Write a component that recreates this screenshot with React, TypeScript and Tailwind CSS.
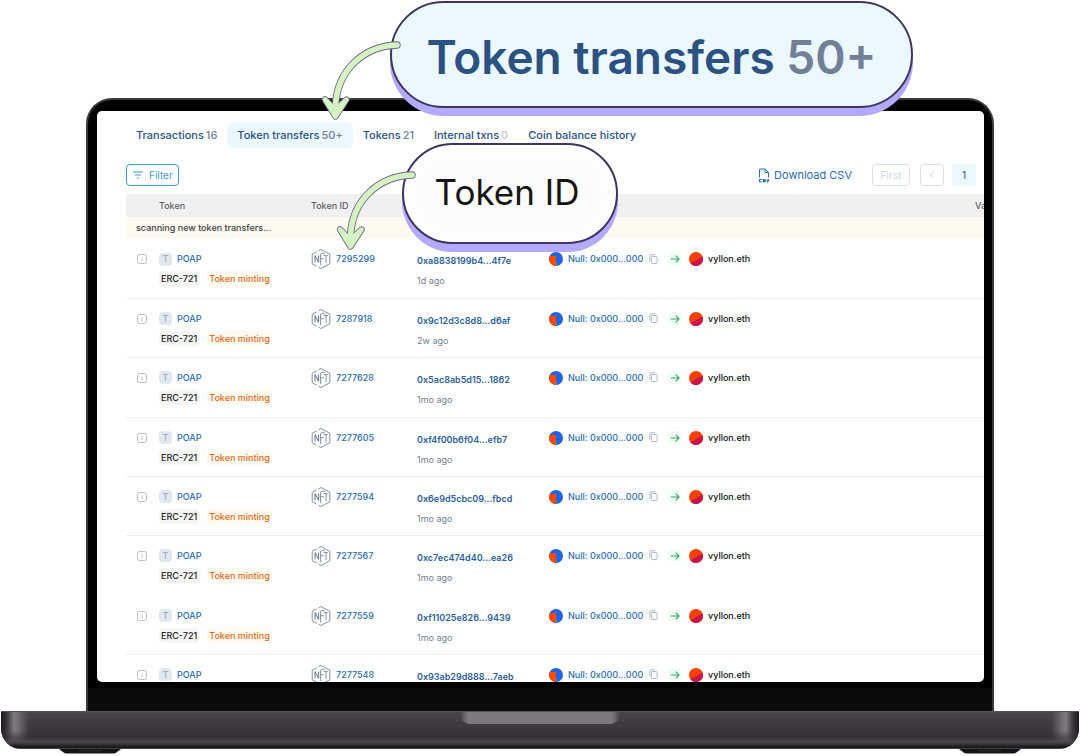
import React from "react";

type Transfer = { id: string; hash: string; age: string };

const transfers: Transfer[] = [
  { id: "7295299", hash: "0xa8838199b4...4f7e", age: "1d ago" },
  { id: "7287918", hash: "0x9c12d3c8d8...d6af", age: "2w ago" },
  { id: "7277628", hash: "0x5ac8ab5d15...1862", age: "1mo ago" },
  { id: "7277605", hash: "0xf4f00b6f04...efb7", age: "1mo ago" },
  { id: "7277594", hash: "0x6e9d5cbc09...fbcd", age: "1mo ago" },
  { id: "7277567", hash: "0xc7ec474d40...ea26", age: "1mo ago" },
  { id: "7277559", hash: "0xf11025e826...9439", age: "1mo ago" },
  { id: "7277548", hash: "0x93ab29d888...7aeb", age: "1mo ago" },
];

const tabs = [
  { label: "Transactions", count: "16" },
  { label: "Token transfers", count: "50+", active: true },
  { label: "Tokens", count: "21" },
  { label: "Internal txns", count: "0", empty: true },
  { label: "Coin balance history" },
];

function InfoIcon() {
  return (
    <svg viewBox="0 0 10 10" className="block size-[10px]" fill="none" stroke="#a9b0ba" aria-hidden="true">
      <rect x="0.5" y="0.5" width="9" height="9" rx="2" strokeWidth="0.8" />
      <path d="M5 4.4v2.8M5 2.7v0.9" strokeWidth="0.8" />
    </svg>
  );
}

function NftIcon() {
  return (
    <svg viewBox="0 0 20 20" className="block size-5" fill="none" stroke="#76839a" strokeWidth="0.9" aria-hidden="true">
      <path d="M7.500 1.800 10 .5l8.800 4.800v9.400L10 19.500l-2.500-1.300M5.700 17.200l-4.500-2.500V5.300l4.500-2.500" />
      <path d="M4 13.600V6.600l3.600 6.800V6.400" strokeWidth="1.100" />
      <path d="M9.600 16.200V5.200L12 4l2 1.100M9.600 9.700h3.200" />
      <path d="M12.600 6.600h4.200M15.100 6.600v7.600" />
    </svg>
  );
}

function CopyIcon() {
  return (
    <svg viewBox="0 0 10 12" className="block h-[11px] w-[9px]" fill="none" stroke="#a3b2c5" aria-hidden="true">
      <rect x="2.700" y="2.700" width="6.300" height="7.800" rx="0.8" />
      <path d="M1 8.500V1.500c0-.4.200-.7.600-.7H7" />
    </svg>
  );
}

function CsvIcon() {
  return (
    <svg viewBox="0 0 12 15" className="block h-[15px] w-3" fill="none" stroke="#2b6cb0" aria-hidden="true">
      <path d="M1.500 9.500V1.800c0-.5.300-.8.800-.8H7l3.500 3.500v5M7 1v3.500h3.500" />
      <path d="M3.800 11.500H1.500v2.300h2.300M7.400 11.500H5.300v1.100h1.900v1.200H5M8.700 11.300l1.100 2.500 1.100-2.500" strokeWidth="1.100" />
    </svg>
  );
}

function FromAvatar() {
  return (
    <svg viewBox="0 0 14 14" className="block size-[14px]" aria-hidden="true">
      <circle cx="7" cy="7" r="7" fill="#2362e1" />
      <path d="M.7 4H7v10A7 7 0 0 1 .7 4Z" fill="#fb4a03" />
      <path d="M7 10.500h1.200L7.600 14H7Z" fill="#1fa0d8" />
    </svg>
  );
}

function ToAvatar() {
  return (
    <svg viewBox="0 0 14 14" className="block size-[14px]" aria-hidden="true">
      <circle cx="7" cy="7" r="7" fill="#f73f01" />
      <path d="M13.500 4.500A7 7 0 0 1 2.100 12L1.500 11.300Z" fill="#c8144c" />
    </svg>
  );
}

function CurvedArrow() {
  const shaft = "M77 7C44 8 17 32 15.500 68";
  const head = "M5 61.500 15.500 78.500 26.500 61.500 18.500 69H12.500Z";
  return (
    <svg viewBox="0 0 84 86" className="block h-[86px] w-[84px]" fill="none" strokeLinecap="round" strokeLinejoin="round" aria-hidden="true">
      <path d={shaft} stroke="#71658a" strokeWidth="7.400" />
      <path d={head} stroke="#71658a" strokeWidth="6.400" />
      <path d={shaft} stroke="#d5f2c3" strokeWidth="5.600" />
      <path d={head} fill="#d5f2c3" stroke="#d5f2c3" strokeWidth="4.600" />
    </svg>
  );
}

function Tabs() {
  return (
    <nav className="flex h-[26px] text-[11px] font-medium text-[#2c5282]" aria-label="Address data">
      {tabs.map((tab) => (
        <a
          key={tab.label}
          href="#"
          className={
            tab.active
              ? "flex items-center gap-[2px] rounded-md bg-[#ebf8ff] px-[10px]"
              : "flex items-center gap-[2px] px-[10px]"
          }
        >
          {tab.label}
          {tab.count && (
            <span className={tab.empty ? "text-[#c3c6cb]" : "text-[#718096]"}>{tab.count}</span>
          )}
        </a>
      ))}
    </nav>
  );
}

function Toolbar() {
  return (
    <div className="mt-4 flex h-[22px] items-center justify-between">
      <button className="flex h-[22px] items-center gap-[5px] rounded border border-[#4299e1] px-[5px] text-[10px] text-[#4299e1]">
        <svg viewBox="0 0 12 8" className="h-2 w-3" stroke="currentColor" aria-hidden="true">
          <path d="M1 1h10M3 4h6M5 7h2" />
        </svg>
        Filter
      </button>
      <div className="flex items-center">
        <a href="#" className="flex items-center gap-1 text-[11px] text-[#2b6cb0]">
          <CsvIcon />
          Download CSV
        </a>
        <div className="ml-5 flex gap-2 text-[10px] font-medium">
          <button disabled className="mr-[2px] h-[22px] w-[38px] rounded border border-[#d9e2ec] text-[#d3dde8]">First</button>
          <button disabled aria-label="Previous page" className="flex h-[22px] w-6 items-center justify-center rounded border border-[#d9e2ec] text-[#c5d0dc]">
            <svg viewBox="0 0 6 8" className="h-2 w-[6px]" fill="none" stroke="currentColor" aria-hidden="true">
              <path d="M4.500 1 1.500 4l3 3" />
            </svg>
          </button>
          <button className="h-[22px] w-6 rounded bg-[#ebf8ff] text-[#4a6f9b]">1</button>
        </div>
      </div>
    </div>
  );
}

function TransferRow({ transfer }: { transfer: Transfer }) {
  return (
    <tr className="h-[59px] border-b border-[#edf0f3] align-top nth-[3n]:h-[60px] nth-[6]:border-transparent">
      <td className="pt-[15px] pl-[11px]">
        <InfoIcon />
      </td>
      <td className="pt-[13px]">
        <a href="#" className="flex h-[14px] items-center gap-[5px] font-medium text-[#2b6cb0]">
          <span className="flex size-[13px] items-center justify-center rounded bg-[#e2e8f0] text-[9px] text-[#a0aec0]">T</span>
          POAP
        </a>
        <div className="mt-[5px] flex gap-2 leading-[15px] font-medium">
          <span className="rounded-sm bg-[#f5f5f6] px-[2px] text-[#1f2328]">ERC-721</span>
          <span className="rounded-sm bg-[#fffaf0] px-[2px] text-[#dd6b20]">Token minting</span>
        </div>
      </td>
      <td className="pt-[10px]">
        <a href="#" className="flex h-5 items-center gap-[5px] font-medium text-[#2b6cb0]">
          <NftIcon />
          {transfer.id}
        </a>
      </td>
      <td className="pt-[14px]">
        <a href="#" className="block leading-[15px] font-semibold text-[#2c5f9b]">{transfer.hash}</a>
        <span className="mt-[5px] block leading-[15px] text-[#718096]">{transfer.age}</span>
      </td>
      <td className="pt-[13px]">
        <div className="flex h-[14px] items-center">
          <FromAvatar />
          <a href="#" className="ml-[5px] w-[77px] font-medium text-[#2b6cb0]">Null: 0x000...000</a>
          <button aria-label="Copy address" className="ml-1">
            <CopyIcon />
          </button>
        </div>
      </td>
      <td className="pt-[13px]">
        <div className="flex h-[14px] items-center">
          <span className="flex size-[13px] items-center justify-center rounded-sm bg-[#f0fff4]">
            <svg viewBox="0 0 10 10" className="size-[10px]" fill="none" stroke="#38a169" aria-hidden="true">
              <path d="M.8 5h8M5.700 1.700 9 5 5.700 8.300" strokeWidth="1.100" />
            </svg>
          </span>
          <span className="ml-2">
            <ToAvatar />
          </span>
          <a href="#" className="ml-[5px] font-medium text-[#101112]">vyllon.eth</a>
        </div>
      </td>
      <td />
    </tr>
  );
}

function TransfersTable() {
  return (
    <table className="mt-2 w-full table-fixed border-collapse text-left text-[9px] whitespace-nowrap">
      <colgroup>
        <col className="w-[33px]" />
        <col className="w-[152px]" />
        <col className="w-[106px]" />
        <col className="w-[132px]" />
        <col className="w-[119px]" />
        <col />
        <col className="w-[9px]" />
      </colgroup>
      <thead>
        <tr className="h-[23px] bg-[#f0f0f0] text-[#5c5f63]">
          <th className="rounded-tl" />
          <th className="font-medium">Token</th>
          <th className="font-medium">Token ID</th>
          <th />
          <th />
          <th />
          <th className="font-medium">Value</th>
        </tr>
        <tr className="h-[22px] bg-[#fffaf0] text-[#3c3f43]">
          <td colSpan={7} className="pl-[10px] font-medium">scanning new token transfers...</td>
        </tr>
      </thead>
      <tbody>
        {transfers.map((transfer) => (
          <TransferRow key={transfer.id} transfer={transfer} />
        ))}
      </tbody>
    </table>
  );
}

function Foot() {
  return (
    <svg viewBox="0 0 62 6" className="block h-[6px] w-[62px]" aria-hidden="true">
      <path d="M0 0h62l-4 3q-1.500 1.500-4 1.500H8Q5.500 4.500 4 3Z" fill="#151416" />
      <path d="M20 1.800h22" stroke="#353337" />
    </svg>
  );
}

function LaptopBase() {
  return (
    <div>
      <div className="relative h-[38px] rounded-b-[20px] bg-[linear-gradient(#5a555c_0,#48434a_2px,#3f3a41_14px,#353036_26px,#4b464d_31px,#3a363c_33px,#19181a_36px,#19181a_37px,#6b676c_38px)]">
        <div className="absolute inset-x-0 top-px bottom-0 rounded-b-[20px] bg-[linear-gradient(90deg,#1c1a1d_0,#3c383e_6px,#817a81_13px,#6e686f_18px,transparent_28px,transparent_calc(100%-28px),#6e686f_calc(100%-18px),#817a81_calc(100%-13px),#3c383e_calc(100%-6px),#1c1a1d_100%)] mask-b-from-50% mask-b-to-85%" />
        <div className="absolute top-px left-1/2 h-3 w-40 -translate-x-1/2 rounded-b-[10px] bg-[linear-gradient(90deg,#4a454c,#7d777e_8px,#7d777e_calc(100%-8px),#4a454c)]" />
      </div>
      <div className="flex justify-between px-[58px]">
        <Foot />
        <Foot />
      </div>
    </div>
  );
}

export default function App() {
  return (
    <main className="relative bg-white pt-[98px] font-['Inter',sans-serif]">
      <div className="mx-[86px] rounded-t-[26px] border-x-2 border-t-2 border-[#3b3b3d] bg-black pt-[11px] pr-2 pl-[9px]">
        <div className="aspect-[887/571] overflow-hidden rounded-[5px] bg-white pt-[11px] pl-[29px]">
          <Tabs />
          <div className="pr-2">
            <Toolbar />
          </div>
          <TransfersTable />
        </div>
        <div className="-mr-2 -ml-[9px] mt-[6px] h-[23px] bg-[#0a0a0a]" />
      </div>
      <div className="mx-px">
        <LaptopBase />
      </div>

      <div className="absolute top-px left-[390px] flex h-[107px] w-[523px] items-center justify-center rounded-full border-2 border-[#403560] bg-[#ebf8ff] pt-[5px] text-[46px] font-semibold whitespace-pre text-[#2c5282] shadow-[0_8px_0_#b3a9fd]">
        Token transfers <span className="text-[#718096]">50+</span>
      </div>
      <div className="absolute top-[143px] left-[402px] flex h-[101px] w-[216px] items-center justify-center rounded-full border-2 border-[#403560] bg-[#fcfcfc] pr-[6px] pb-[3px] text-[35px] text-[#151515] shadow-[0_8px_0_#b3a9fd,inset_0_0_12px_8px_#ffffff]">
        Token ID
      </div>
      <div className="absolute top-[38px] left-[320px]">
        <CurvedArrow />
      </div>
      <div className="absolute top-[168px] left-[335px]">
        <CurvedArrow />
      </div>
    </main>
  );
}
